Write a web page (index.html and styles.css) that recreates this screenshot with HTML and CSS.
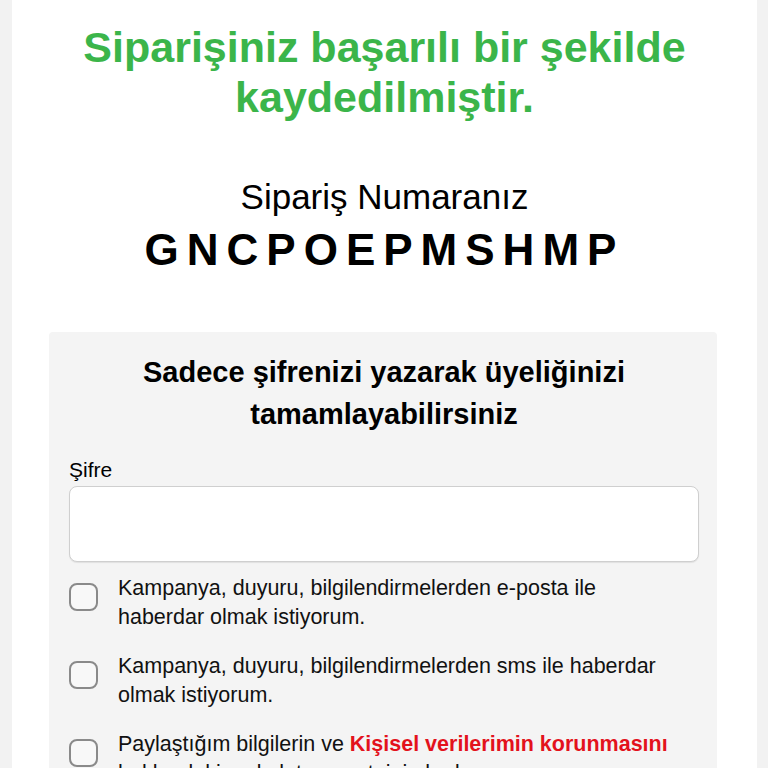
FILE: index.html
```html
<!DOCTYPE html>
<html lang="tr">
<head>
<meta charset="utf-8">
<link rel="stylesheet" href="styles.css">
</head>
<body>
<main class="page">
  <h1 class="success">Siparişiniz başarılı bir şekilde kaydedilmiştir.</h1>
  <section class="order">
    <div class="order-label">Sipariş Numaranız</div>
    <div class="order-code">GNCPOEPMSHMP</div>
  </section>
  <section class="card">
    <h2 class="card-title">Sadece şifrenizi yazarak üyeliğinizi tamamlayabilirsiniz</h2>
    <label class="field-label" for="pw">Şifre</label>
    <input class="field-input" id="pw" type="password">
    <div class="checks">
      <label class="check">
        <span class="box"></span>
        <span class="check-text">Kampanya, duyuru, bilgilendirmelerden e-posta ile haberdar olmak istiyorum.</span>
      </label>
      <label class="check">
        <span class="box"></span>
        <span class="check-text">Kampanya, duyuru, bilgilendirmelerden sms ile haberdar olmak istiyorum.</span>
      </label>
      <label class="check">
        <span class="box"></span>
        <span class="check-text">Paylaştığım bilgilerin ve <b class="link">Kişisel verilerimin korunmasını</b> hakkındaki aydınlatma metnini okudum.</span>
      </label>
    </div>
  </section>
</main>
</body>
</html>
```
FILE: styles.css
```css
html, body {
  margin: 0;
  padding: 0;
}
body {
  background: #f2f2f2;
  font-family: "Liberation Sans", Arial, sans-serif;
  color: #000;
  height: 768px;
  overflow: hidden;
}
.page {
  background: #fff;
  margin-left: 12px;
  width: 745px;
  min-height: 768px;
  padding-top: 22px;
  box-sizing: border-box;
}
.success {
  margin: 0;
  color: #3bb54a;
  font-size: 43px;
  line-height: 50px;
  font-weight: bold;
  text-align: center;
  padding: 0 50px;
}
.order {
  margin-top: 57px;
  text-align: center;
}
.order-label {
  font-size: 35px;
  line-height: 36px;
}
.order-code {
  font-size: 44px;
  font-weight: bold;
  letter-spacing: 8px;
  line-height: 50px;
  margin-top: 10px;
}
.card {
  margin: 57px 0 0 37px;
  width: 668px;
  background: #f4f4f4;
  border-radius: 4px;
  padding: 19px 18px 20px 20px;
  box-sizing: border-box;
}
.card-title {
  margin: 0;
  font-size: 29px;
  line-height: 42px;
  font-weight: bold;
  text-align: center;
  padding: 0 40px;
}
.field-label {
  display: block;
  margin-top: 23px;
  font-size: 21px;
  line-height: 24px;
}
.field-input {
  display: block;
  box-sizing: border-box;
  width: 630px;
  height: 76px;
  margin-top: 4px;
  border: 1px solid #cfcfcf;
  border-radius: 8px;
  background: #fff;
  box-shadow: 0 1px 1px rgba(0,0,0,0.08);
}
.checks {
  display: flex;
  flex-direction: column;
  gap: 20px;
  margin-top: 12px;
}
.check {
  display: flex;
  align-items: flex-start;
  gap: 20px;
}
.box {
  flex: none;
  width: 29px;
  height: 28px;
  box-sizing: border-box;
  border: 2px solid #8a8a8a;
  border-radius: 8px;
  margin-top: 9px;
  background: #f8f8f8;
}
.check-text {
  font-size: 21.5px;
  line-height: 29px;
  color: #111;
  padding-right: 23px;
}
.link {
  color: #e3121c;
}
```
